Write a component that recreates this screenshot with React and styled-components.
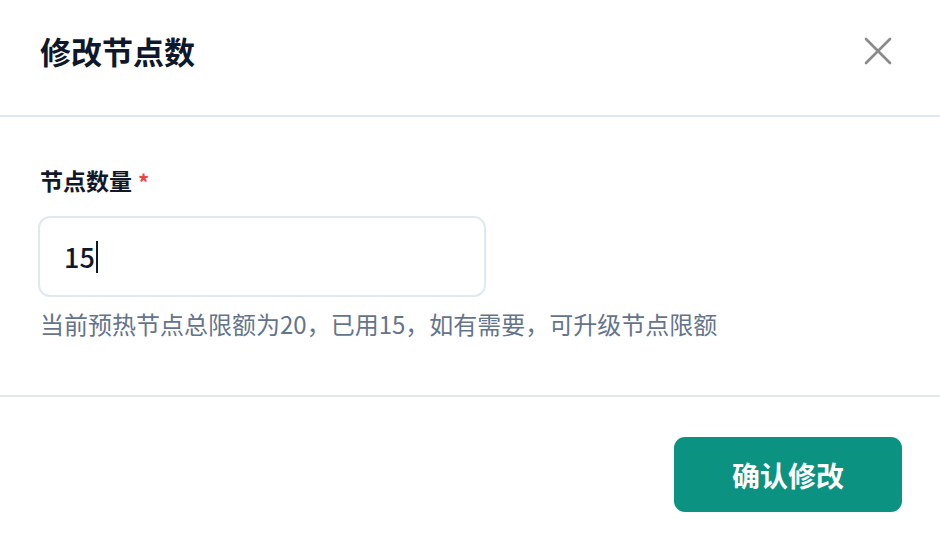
import React from 'react';
import styled, { createGlobalStyle } from 'styled-components';

const GlobalStyle = createGlobalStyle`
	html, body {
		margin: 0;
		padding: 0;
		background: #ffffff;
	}
	body {
		font-family: "Noto Sans CJK SC", "Noto Sans", sans-serif;
	}
`;

const Modal = styled.div`
	width: 940px;
	height: 536px;
	display: flex;
	flex-direction: column;
	background: #ffffff;
	overflow: hidden;
`;

const Header = styled.div`
	height: 117px;
	display: flex;
	align-items: center;
	justify-content: space-between;
	padding: 0 42px 14px 40px;
	box-sizing: border-box;
	border-bottom: 2px solid #e2e8f0;
`;

const Title = styled.h2`
	margin: 0;
	font-size: 31px;
	font-weight: 700;
	color: #0f172a;
	line-height: 1;
`;

const CloseButton = styled.button`
	width: 40px;
	height: 40px;
	display: flex;
	align-items: center;
	justify-content: center;
	padding: 0;
	border: none;
	background: transparent;
	cursor: pointer;
`;

const Body = styled.div`
	height: 280px;
	padding: 0 40px 0 38px;
	box-sizing: border-box;
	border-bottom: 2px solid #e2e8f0;
	display: flex;
	flex-direction: column;
`;

const Label = styled.label`
	margin: 50px 0 0 2px;
	font-size: 23px;
	font-weight: 700;
	color: #111827;
	line-height: 26px;
	display: flex;
	align-items: center;
	gap: 6px;

	span {
		color: #ef4444;
		font-size: 22px;
		line-height: 18px;
		margin-top: 2px;
	}
`;

const Input = styled.div`
	margin-top: 23px;
	width: 448px;
	height: 81px;
	box-sizing: border-box;
	border: 2px solid #e2e8f0;
	border-radius: 12px;
	display: flex;
	align-items: center;
	padding-left: 24px;
	font-size: 27px;
	font-weight: 500;
	color: #0f172a;
`;

const Caret = styled.i`
	display: inline-block;
	width: 2px;
	height: 32px;
	margin-left: 1px;
	background: #0f172a;
`;

const Hint = styled.p`
	margin: 12px 0 0 2px;
	font-size: 24px;
	color: #64748b;
	line-height: 30px;
`;

const Footer = styled.div`
	flex: 1;
	display: flex;
	justify-content: flex-end;
	align-items: flex-start;
	padding: 40px 38px 0 0;
`;

const PrimaryButton = styled.button`
	width: 228px;
	height: 75px;
	border: none;
	border-radius: 11px;
	background: #0b9281;
	color: #ffffff;
	font-family: inherit;
	font-size: 28px;
	font-weight: 700;
	cursor: pointer;
`;

const App = () => {
	return (
		<Modal>
			<GlobalStyle />
			<Header>
				<Title>修改节点数</Title>
				<CloseButton>
					<svg width="28" height="28" viewBox="0 0 28 28">
						<path d="M2 2 L26 26 M26 2 L2 26" stroke="#8a8a8a" strokeWidth="2.6" strokeLinecap="round" />
					</svg>
				</CloseButton>
			</Header>
			<Body>
				<Label>节点数量<span>*</span></Label>
				<Input>15<Caret /></Input>
				<Hint>当前预热节点总限额为20，已用15，如有需要，可升级节点限额</Hint>
			</Body>
			<Footer>
				<PrimaryButton>确认修改</PrimaryButton>
			</Footer>
		</Modal>
	);
};

export default App;
